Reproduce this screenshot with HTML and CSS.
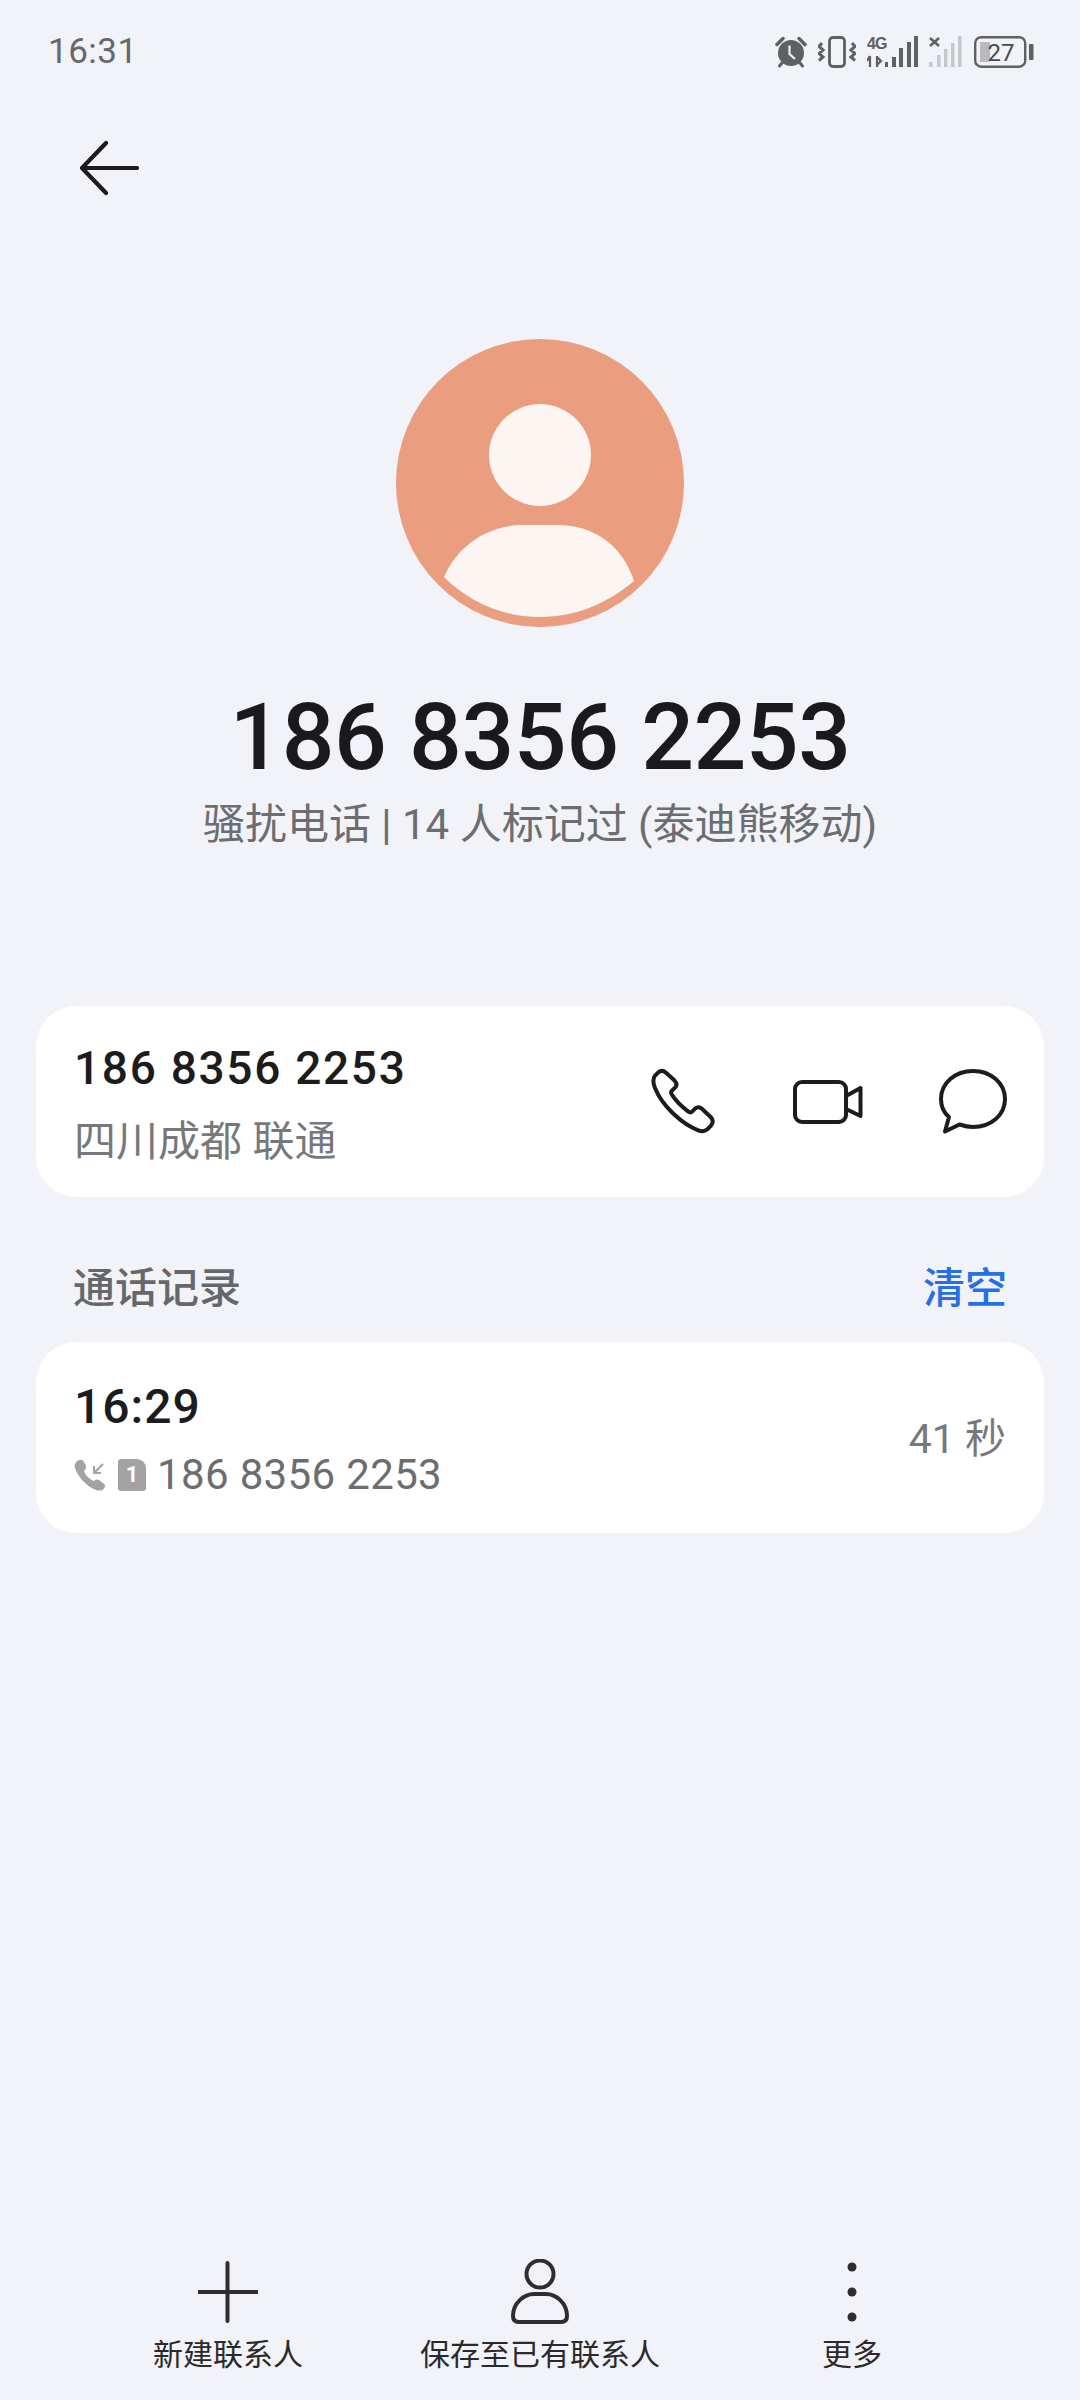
FILE: index.html
```html
<!DOCTYPE html>
<html>
	<head>
		<meta charset="utf-8">
		<title>通话详情</title>
		<link rel="stylesheet" href="styles.css">
	</head>
	<body>
		<div class="page">
			<div class="statusBar">
				<span class="statusTime">16:31</span>
				<div class="statusIcons">
					<svg width="32" height="32" viewBox="0 0 32 32">
						<circle cx="16" cy="17" r="13" fill="#5f6062"/>
						<path d="M2 8.500 L8 2.500 M24 2.500 L30 8.500" stroke="#5f6062" stroke-width="3.500" stroke-linecap="round"/>
						<path d="M7 27 L4.500 30 M25 27 L27.500 30" stroke="#5f6062" stroke-width="3" stroke-linecap="round"/>
						<path d="M14.500 9.500 V18 L20 23" fill="none" stroke="#f1f3f8" stroke-width="2.200"/>
					</svg>
					<svg width="38" height="32" viewBox="0 0 38 32">
						<rect x="11.500" y="1.500" width="15" height="29" rx="3.500" fill="none" stroke="#5f6062" stroke-width="2.800"/>
						<path d="M4 7 L1 10.500 L5 14 L1 17.500 L5 21 L1 24.500 M34 7 L37 10.500 L33 14 L37 17.500 L33 21 L37 24.500" fill="none" stroke="#5f6062" stroke-width="3"/>
					</svg>
					<svg width="51" height="32" viewBox="0 0 51 32">
						<text x="0" y="13" class="netLabel">4G</text>
						<path d="M3 20 V31 M0 25 L3 20 M10 20 V31 M10 21 L14 25 L10 29" fill="none" stroke="#5f6062" stroke-width="2.200"/>
						<rect x="18" y="26" width="3" height="5" fill="#5f6062"/>
						<rect x="25" y="21" width="4" height="10" fill="#5f6062"/>
						<rect x="32" y="12" width="4" height="19" fill="#5f6062"/>
						<rect x="40" y="6" width="4" height="25" fill="#5f6062"/>
						<rect x="47" y="0" width="4" height="31" fill="#5f6062"/>
					</svg>
					<svg width="34" height="32" viewBox="0 0 34 32">
						<path d="M1 2 L10 10 M10 2 L1 10" stroke="#5f6062" stroke-width="2.600"/>
						<rect x="0" y="26" width="3.500" height="5" fill="#c6c7ca"/>
						<rect x="8" y="19" width="3.500" height="12" fill="#c6c7ca"/>
						<rect x="15" y="13" width="3.500" height="18" fill="#c6c7ca"/>
						<rect x="22" y="7" width="3.500" height="24" fill="#c6c7ca"/>
						<rect x="29" y="0" width="3.500" height="31" fill="#c6c7ca"/>
					</svg>
					<svg width="60" height="32" viewBox="0 0 60 32">
						<rect x="1.200" y="1.200" width="50" height="29.500" rx="6" fill="none" stroke="#5f6062" stroke-width="2.400"/>
						<rect x="6" y="6" width="10" height="20" fill="#b9babd"/>
						<rect x="55" y="8" width="4.500" height="16" rx="1" fill="#5f6062"/>
						<text x="27" y="25" class="batteryText">27</text>
					</svg>
				</div>
			</div>

			<div class="backRow">
				<svg width="60" height="56" viewBox="0 0 60 56">
					<path d="M58 28 H3 M27 3 L3 28 L27 53" fill="none" stroke="#1c1c1e" stroke-width="4.200" stroke-linecap="round" stroke-linejoin="round"/>
				</svg>
			</div>

			<div class="profile">
				<svg class="avatar" width="288" height="288" viewBox="0 0 288 288">
					<circle cx="144" cy="144" r="144" fill="#ea9d7f"/>
					<circle cx="144" cy="116" r="51" fill="#fcf5f1"/>
					<path d="M48 238 C62 205 94 186 126 186 H162 C196 186 226 205 238 242 C212 264 180 278 144 278 C108 278 74 264 48 238 Z" fill="#fcf5f1"/>
				</svg>
				<h1 class="bigNumber">186 8356 2253</h1>
				<p class="tag">骚扰电话 | 14 人标记过 (泰迪熊移动)</p>
			</div>

			<div class="card numberCard">
				<div class="cardText">
					<div class="cardNumber">186 8356 2253</div>
					<div class="cardPlace">四川成都 联通</div>
				</div>
				<div class="actions">
					<svg width="68" height="68" viewBox="90 115 204 204">
						<path d="M118 128 C125 122 134 123 141 129 L166 152 C174 160 174 168 168 174 L158 184 C155 188 156 192 160 197 C172 215 190 232 207 245 C212 249 217 248 220 245 L229 236 C234 232 241 232 247 236 L275 262 C283 270 282 280 276 288 L266 298 C258 305 248 306 238 302 C190 284 130 230 108 175 C102 160 102 146 108 138 Z" fill="none" stroke="#1c1c1e" stroke-width="12" stroke-linejoin="round"/>
					</svg>
					<svg width="70" height="44" viewBox="0 0 70 44">
						<rect x="2" y="2" width="51" height="40" rx="7" fill="none" stroke="#1c1c1e" stroke-width="4"/>
						<path d="M53 16 L67.500 8 V36 L53 29" fill="none" stroke="#1c1c1e" stroke-width="4" stroke-linejoin="round"/>
					</svg>
					<svg width="68" height="66" viewBox="0 0 68 66">
						<path d="M10 48 C4 43 2 36 2 30 C2 14 16 2 34 2 C52 2 66 14 66 30 C66 46 52 58 34 58 C29 58 25 57 20.500 55.500 L6 62.500 Z" fill="none" stroke="#1c1c1e" stroke-width="4" stroke-linejoin="round"/>
					</svg>
				</div>
			</div>

			<div class="recordHead">
				<span class="recordTitle">通话记录</span>
				<span class="recordClear">清空</span>
			</div>

			<div class="card recordCard">
				<div class="cardText">
					<div class="recordTime">16:29</div>
					<div class="recordLine">
						<svg width="32" height="32" viewBox="0 0 32 32">
							<path d="M4 1.500 C6 0 9 .5 10 3 L12 7 C12.500 9 11.500 10.500 10 12 C11.500 16 15 20 20 22 C21.500 20.500 23 20 25 21 L29.500 24.500 C31.500 26 31.500 28 30 29.500 C28 32 25 32 22 31 C13 28 4 18 1 9 C0 6 1.500 3 4 1.500 Z" fill="#a3a3a5"/>
							<path d="M29 5 L20 14 M20 7 V14 H27" fill="none" stroke="#a3a3a5" stroke-width="2"/>
						</svg>
						<div class="simIcon">1</div>
						<span class="recordNumber">186 8356 2253</span>
					</div>
				</div>
				<span class="recordLength">41 秒</span>
			</div>

			<div class="bottomBar">
				<div class="barItem">
					<svg width="60" height="60" viewBox="0 0 60 60">
						<path d="M29.500 1 V59 M1 30 H59" stroke="#2e2e30" stroke-width="4" stroke-linecap="round"/>
					</svg>
					<span>新建联系人</span>
				</div>
				<div class="barItem">
					<svg width="60" height="66" viewBox="0 0 60 66">
						<ellipse cx="30" cy="15" rx="13.500" ry="13.500" fill="none" stroke="#2e2e30" stroke-width="4"/>
						<path d="M3 57 C3 44 14 35 24 35 H36 C46 35 57 44 57 57 C57 61 55 63 51 63 H9 C5 63 3 61 3 57 Z" fill="none" stroke="#2e2e30" stroke-width="4"/>
					</svg>
					<span>保存至已有联系人</span>
				</div>
				<div class="barItem">
					<svg width="60" height="60" viewBox="0 0 60 60">
						<circle cx="30" cy="5" r="4.500" fill="#2e2e30"/>
						<circle cx="30" cy="30" r="4.500" fill="#2e2e30"/>
						<circle cx="30" cy="55" r="4.500" fill="#2e2e30"/>
					</svg>
					<span>更多</span>
				</div>
			</div>
		</div>
	</body>
</html>
```

FILE: styles.css
```css
*{box-sizing: border-box;}
html,body{margin: 0;padding: 0;}
body{
	width: 1080px;
	height: 2400px;
	background-color: #f1f3f8;
	font-family: Roboto, "Noto Sans CJK SC", sans-serif;
	color: #1c1c1e;
	overflow: hidden;
}
svg{display: block;flex: none;}
.page{
	height: 2400px;
	display: flex;
	flex-direction: column;
}

.statusBar{
	height: 100px;
	padding: 36px 46px 0 48px;
	display: flex;
	justify-content: space-between;
	align-items: flex-start;
}
.statusTime{
	font-size: 35px;
	line-height: 32px;
	color: #66676a;
	letter-spacing: .5px;
}
.statusIcons{
	display: flex;
	gap: 11px;
}
.netLabel{
	font-family: "Liberation Sans", sans-serif;
	font-size: 16px;
	font-weight: 700;
	letter-spacing: -1px;
	fill: #5f6062;
}
.batteryText{
	font-family: Roboto, sans-serif;
	font-size: 24px;
	text-anchor: middle;
	fill: #4a4b4d;
}

.backRow{padding: 40px 0 0 79px;}

.profile{
	margin-top: 143px;
	display: flex;
	flex-direction: column;
	align-items: center;
}
.bigNumber{
	margin: 63px 0 0;
	font-size: 93px;
	line-height: 96px;
	font-weight: 500;
	letter-spacing: -.5px;
	color: #1a1a1c;
}
.tag{
	margin: 11px 0 0;
	font-size: 42px;
	line-height: 56px;
	color: #6c6d70;
}

.card{
	margin: 0 36px;
	height: 191px;
	background-color: #fff;
	border-radius: 40px;
	padding: 0 37px 0 38px;
	display: flex;
	justify-content: space-between;
	align-items: center;
}
.numberCard{margin-top: 153px;}
.cardText{padding-top: 6px;}
.cardNumber{
	font-size: 46px;
	line-height: 56px;
	font-weight: 500;
	letter-spacing: 1.700px;
}
.cardPlace{
	margin-top: 18px;
	font-size: 42px;
	line-height: 56px;
	color: #77787b;
}
.actions{
	display: flex;
	align-items: center;
	gap: 76px;
}

.recordHead{
	height: 145px;
	padding: 30px 73px 0;
	display: flex;
	justify-content: space-between;
	align-items: center;
	font-size: 42px;
	font-weight: 500;
}
.recordTitle{color: #66676a;}
.recordClear{color: #256fe8;}

.recordTime{
	font-size: 48px;
	line-height: 56px;
	font-weight: 500;
	letter-spacing: 1px;
}
.recordLine{
	margin-top: 12px;
	display: flex;
	align-items: center;
}
.simIcon{
	margin-left: 12px;
	width: 28px;
	height: 32px;
	background-color: #a3a3a5;
	border-radius: 3px 9px 3px 3px;
	color: #fff;
	font-size: 22px;
	font-weight: 700;
	line-height: 32px;
	text-align: center;
}
.recordNumber{
	margin-left: 11px;
	font-size: 42px;
	line-height: 56px;
	letter-spacing: .35px;
	color: #6c6d70;
}
.recordLength{
	padding-bottom: 5px;
	padding-right: 1px;
	font-size: 41px;
	color: #77787b;
}

.bottomBar{
	margin-top: auto;
	height: 141px;
	display: grid;
	grid-template-columns: repeat(3, 312px);
	justify-content: center;
}
.barItem{
	display: flex;
	flex-direction: column;
	align-items: center;
	font-size: 30px;
	line-height: 40px;
	color: #2a2a2c;
}
.barItem svg{height: 66px;margin-bottom: 10px;}
```
